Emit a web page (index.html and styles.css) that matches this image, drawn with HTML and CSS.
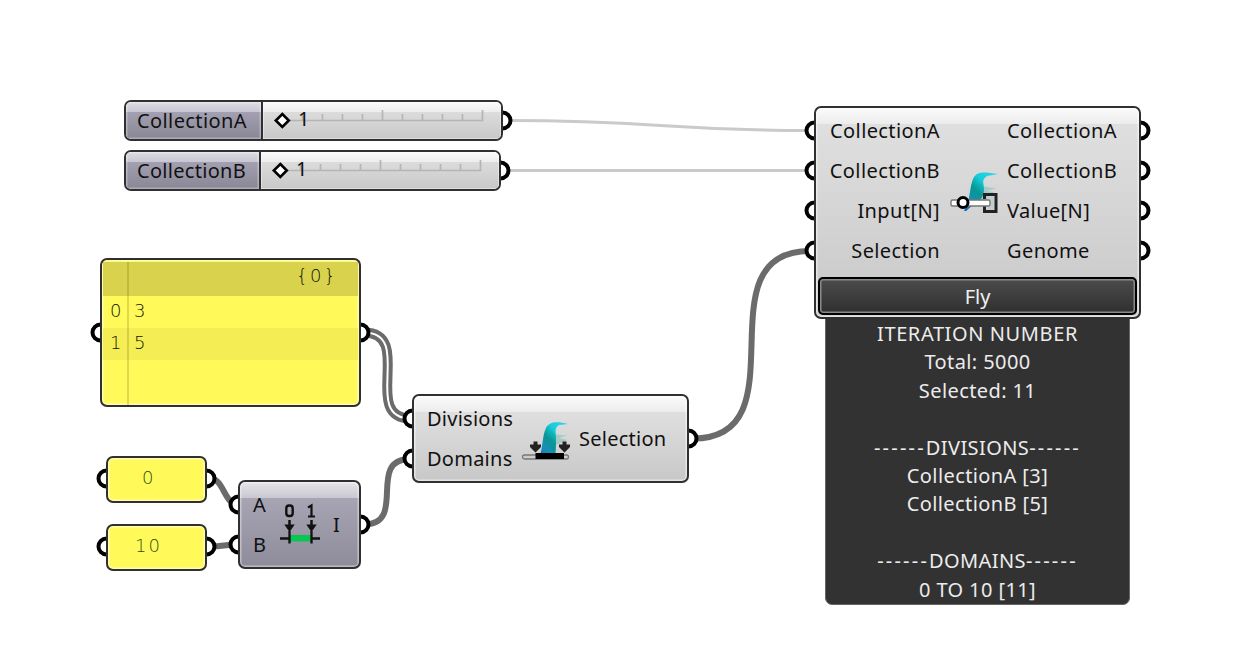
FILE: index.html
```html
<!DOCTYPE html>
<html lang="en">
<head>
<meta charset="utf-8">
<title>Definition canvas</title>
<link rel="stylesheet" href="styles.css">
</head>
<body>
<main class="canvas">
  <svg class="wires" width="1240" height="670" viewBox="0 0 1240 670" fill="none">
    <g stroke="#cacaca" stroke-width="3">
      <path d="M508 120.5C660 120.5 660 130.500 810 130.500"/>
      <path d="M508 170.500H810"/>
    </g>
    <g stroke="#6b6b6b" stroke-width="6">
      <path d="M693 438.500C805 438.500 698 251 810 251"/>
      <path d="M364 524.500C408 524.500 366 459 410 459"/>
      <path d="M210 478.500C224 478.500 224 504.500 238 504.500"/>
      <path d="M210 546.500C224 546.500 224 544.500 238 544.500"/>
    </g>
    <path d="M364 332.500C415 332.500 360 418.500 411 418.500" stroke="#6b6b6b" stroke-width="10"/>
    <path d="M364 332.500C415 332.500 360 418.500 411 418.500" stroke="#fff" stroke-width="2"/>
    <g class="ports" fill="#fff" stroke="#000" stroke-width="4">
      <circle cx="502.500" cy="120.500" r="8"/><circle cx="500.500" cy="170.500" r="8"/>
      <circle cx="100.500" cy="332.500" r="8"/><circle cx="360.500" cy="332.500" r="8"/>
      <circle cx="106.500" cy="478.500" r="8"/><circle cx="206.500" cy="478.500" r="8"/>
      <circle cx="106.500" cy="546.500" r="8"/><circle cx="206.500" cy="546.500" r="8"/>
      <circle cx="238.500" cy="504.500" r="8"/><circle cx="238.500" cy="544.500" r="8"/>
      <circle cx="360.500" cy="524.500" r="8"/>
      <circle cx="412.500" cy="418.500" r="8"/><circle cx="412.500" cy="458.500" r="8"/>
      <circle cx="688.500" cy="438.500" r="8"/>
      <circle cx="814.500" cy="130.500" r="8"/><circle cx="814.500" cy="170.500" r="8"/>
      <circle cx="814.500" cy="210.500" r="8"/><circle cx="814.500" cy="250.500" r="8"/>
      <circle cx="1140.500" cy="130.500" r="8"/><circle cx="1140.500" cy="170.500" r="8"/>
      <circle cx="1140.500" cy="210.500" r="8"/><circle cx="1140.500" cy="250.500" r="8"/>
    </g>
  </svg>

  <section class="node slider slider-a">
    <div class="slider-name">CollectionA</div>
    <div class="slider-track">
      <svg width="238" height="37" viewBox="0 0 238 37">
        <path d="M18 18.500H220.500M39.500 18.500V12M59.500 18.500V12M79.500 18.500V12M99.500 18.500V12M119.500 18.500V8M139.500 18.500V12M159.500 18.500V12M179.500 18.500V12M199.500 18.500V12M219.500 18.500V8" stroke="#b5b5b5" stroke-width="1.700" fill="none"/>
        <path d="M19.300 12L25.800 18.500L19.300 25L12.800 18.500Z" fill="#fff" stroke="#000" stroke-width="2.600"/>
      </svg>
      <span class="slider-value">1</span>
    </div>
  </section>
  <section class="node slider slider-b">
    <div class="slider-name">CollectionB</div>
    <div class="slider-track">
      <svg width="238" height="37" viewBox="0 0 238 37">
        <path d="M18 18.500H220.500M39.500 18.500V12M59.500 18.500V12M79.500 18.500V12M99.500 18.500V12M119.500 18.500V8M139.500 18.500V12M159.500 18.500V12M179.500 18.500V12M199.500 18.500V12M219.500 18.500V8" stroke="#b5b5b5" stroke-width="1.700" fill="none"/>
        <path d="M19.300 12L25.800 18.500L19.300 25L12.800 18.500Z" fill="#fff" stroke="#000" stroke-width="2.600"/>
      </svg>
      <span class="slider-value">1</span>
    </div>
  </section>

  <section class="node panel panel-list">
    <div class="panel-head"><span>{0}</span></div>
    <div class="panel-row"><span>0</span><span>3</span></div>
    <div class="panel-row alt"><span>1</span><span>5</span></div>
  </section>
  <section class="node panel panel-min"><span>0</span></section>
  <section class="node panel panel-max"><span>10</span></section>

  <section class="node domain">
    <div class="column"><span>A</span><span>B</span></div>
    <svg class="domain-icon" width="42" height="46" viewBox="0 0 42 46">
      <g fill="none" stroke="#111">
        <rect x="6.300" y="3.500" width="6.400" height="10.500" rx="2.800" stroke-width="2.400"/>
        <path d="M28 5.500L31.500 3.500V14.500M28 14.500H35" stroke-width="2.200"/>
        <path d="M9.500 18V23M31.500 18V23" stroke-width="2.500"/>
        <path d="M0 36.500H40" stroke-width="2.300"/>
      </g>
      <path d="M4.300 22.500H14.700L9.500 30ZM26.300 22.500H36.700L31.500 30Z" fill="#111"/>
      <path d="M10 33H31V39.500H10Z" fill="#08c653"/>
      <path d="M9.500 29V41.500M31.500 29V41.500" stroke="#111" stroke-width="2.300"/>
    </svg>
    <div class="output">I</div>
  </section>

  <section class="node component selection">
    <div class="column"><span>Divisions</span><span>Domains</span></div>
    <svg class="selection-icon" width="50" height="44" viewBox="0 0 50 44">
      <defs>
        <linearGradient id="bird" x1="0" y1="1" x2=".8" y2="0">
          <stop offset="0" stop-color="#125eb0"/><stop offset=".25" stop-color="#168fba"/><stop offset=".5" stop-color="#079594"/><stop offset=".75" stop-color="#16cddb"/><stop offset="1" stop-color="#27d5e5"/>
        </linearGradient>
        <filter id="soft"><feGaussianBlur stdDeviation=".65"/></filter>
      </defs>
      <g filter="url(#soft)">
        <path d="M26 13C35 14 40 16 47 15L38 18L46 20L35 25L25 27Z" fill="#8ec6bf" opacity=".7"/>
        <path d="M18 38C22 29 21 16 25 8C28 2 35 1 47 4L38 5C33 8 35 12 35 18C35 27 35 31 34 37Z" fill="url(#bird)"/>
      </g>
      <rect x="1.500" y="35" width="46" height="4" rx="2" fill="#ccc" stroke="#777" stroke-width="1.300"/>
      <path d="M14.500 33H43V39H14.500Z" fill="#000"/>
      <path d="M14.500 21.500V28M43.500 21.500V28" stroke="#222" stroke-width="4"/>
      <path d="M9 24.500H20V27L14.500 32.500L9 27ZM38 24.500H49V27L43.500 32.500L38 27Z" fill="#222"/>
    </svg>
    <div class="output">Selection</div>
  </section>

  <aside class="report">
    <p class="caps">ITERATION NUMBER</p>
    <p>Total: 5000</p>
    <p>Selected: 11</p>
    <p>&nbsp;</p>
    <p><span class="rule">------</span>DIVISIONS<span class="rule">------</span></p>
    <p>CollectionA [3]</p>
    <p>CollectionB [5]</p>
    <p>&nbsp;</p>
    <p><span class="rule">------</span>DOMAINS<span class="rule">------</span></p>
    <p>0 TO 10 [11]</p>
  </aside>
  <section class="node component fly">
    <div class="fly-body">
      <div class="column inputs"><span>CollectionA</span><span>CollectionB</span><span>Input[N]</span><span>Selection</span></div>
      <svg class="fly-icon" width="50" height="46" viewBox="0 0 50 46">
        <g filter="url(#soft)">
          <path d="M28 12C34 15 39 17 48 17L38 20L45 21L37 29L28 29Z" fill="#8ec6bf" opacity=".7"/>
          <path d="M15 40C22 29 20 15 25 6C29 0 36 1 49 3L38 5C32 9 35 12 35 18C35 25 32 29 29 30L17 40Z" fill="url(#bird)"/>
        </g>
        <path d="M35.500 28V23.500H47V40.500H35.500V35" fill="none" stroke="#222" stroke-width="3"/>
        <path d="M38 25.500H45V38.500H38Z" fill="#c4cfcd"/>
        <rect x="2" y="29" width="39" height="6" rx="1.500" fill="#fff" stroke="#777" stroke-width="1.400"/>
        <circle cx="14" cy="31.500" r="5" fill="#fff" stroke="#000" stroke-width="3"/>
      </svg>
      <div class="column outputs"><span>CollectionA</span><span>CollectionB</span><span>Value[N]</span><span>Genome</span></div>
    </div>
    <div class="fly-button">Fly</div>
  </section>
</main>
</body>
</html>
```
FILE: styles.css
```css
* { box-sizing: border-box; }
body { margin: 0; background: #fff; }
p { margin: 0; }
.canvas {
  position: relative;
  width: 1240px;
  height: 670px;
  overflow: hidden;
  background: #fff;
  color: #111;
  font: 20px/40px "Noto Sans", "Open Sans", sans-serif;
  white-space: nowrap;
}
.wires { position: absolute; left: 0; top: 0; }
.node {
  position: absolute;
  display: flex;
  border: 2px solid #303030;
  border-radius: 7px;
  overflow: hidden;
}
.column { display: flex; flex-direction: column; }

.slider { left: 124px; height: 41px; }
.slider-a { top: 100px; width: 379px; }
.slider-b { top: 150px; width: 377px; }
.slider-name {
  width: 137px;
  padding-left: 11px;
  border-right: 2px solid #303030;
  line-height: 38px;
  letter-spacing: .4px;
  background: linear-gradient(#dddce3 0, #c8c6d2 10px, #a3a1b1 10px, #898796 100%);
  box-shadow: inset 0 0 0 1.5px rgba(255, 255, 255, .3);
}
.slider-b .slider-name { width: 135px; letter-spacing: .3px; }
.slider-track {
  position: relative;
  flex: 1;
  background: linear-gradient(#fbfbfb 0, #ededed 10px, #dcdcdc 10px, #c8c8c8 100%);
  box-shadow: inset 0 0 0 1px rgba(255, 255, 255, .4);
}
.slider-track svg { display: block; }
.slider-value { position: absolute; left: 35px; top: -2px; line-height: 38px; }

.panel {
  background: #fff95a;
  box-shadow: inset 0 0 0 1.5px #fffcae;
  color: #111505;
  font-family: "DejaVu Sans Light", "DejaVu Sans", "Open Sans", sans-serif;
  font-weight: 200;
  font-size: 18px;
}
.panel-list { left: 100px; top: 258px; width: 261px; height: 149px; flex-direction: column; padding: 2px 1px 0; }
.panel-list::after {
  content: "";
  position: absolute;
  left: 25px;
  top: 2px;
  bottom: 0;
  width: 2px;
  background: rgba(90, 90, 0, .2);
}
.panel-head { height: 34px; padding-right: 20px; background: #d8d24d; text-align: right; line-height: 28px; letter-spacing: 2.5px; }
.panel-row { display: flex; height: 32px; line-height: 29px; }
.panel-row span { width: 24px; padding-left: 7px; }
.panel-row.alt { background: #f4ee54; }
.panel-min, .panel-max { left: 106px; width: 101px; height: 47px; line-height: 40px; letter-spacing: 2px; color: #2c5210; }
.panel-min { top: 456px; padding-left: 34px; }
.panel-max { top: 524px; padding-left: 27px; }

.domain {
  left: 238px;
  top: 480px;
  width: 123px;
  height: 89px;
  padding: 3px 0 0 13px;
  background: linear-gradient(#e6e5eb 0, #c9c8d1 16px, #a7a5b3 16px, #8e8c9a 100%);
  box-shadow: inset 0 0 0 1.5px rgba(255, 255, 255, .4);
}
.domain .column { width: 27px; }
.domain-icon { margin-top: 17px; }
.domain .output { margin: 20px 0 0 11px; }

.component {
  background: linear-gradient(#fbfbfb 0, #ececec 16px, #dfdfdf 16px, #c8c8c8 100%);
  box-shadow: inset 0 0 0 1.5px rgba(255, 255, 255, .5);
}
.selection { left: 412px; top: 394px; width: 277px; height: 89px; padding: 3px 0 0 13px; letter-spacing: .25px; }
.selection .column { width: 94px; }
.selection-icon { margin-top: 21px; }
.selection .output { margin: 20px 0 0 8px; }

.fly { left: 814px; top: 106px; width: 327px; height: 213px; flex-direction: column; padding: 3px 2px 2px; }
.fly-body { display: flex; height: 167px; letter-spacing: .4px; }
.inputs { width: 122px; text-align: right; }
.fly-icon { margin: 60px 0 0 9px; }
.outputs { margin-left: 8px; }
.fly-button {
  height: 38px;
  border: 2px solid #000;
  border-radius: 5px;
  box-shadow: inset 0 0 0 1.5px #8a8a8a;
  background: linear-gradient(#4c4c4c, #2f2f2f);
  color: #f0f0f0;
  line-height: 35px;
  text-align: center;
}

.report {
  position: absolute;
  left: 825px;
  top: 312px;
  width: 305px;
  height: 293px;
  padding-top: 7px;
  border: 1px solid #666;
  border-radius: 7px;
  background: #323232;
  color: #ececec;
  line-height: 28.4px;
  letter-spacing: .4px;
  text-align: center;
}
.caps { letter-spacing: .6px; }
.rule { letter-spacing: 2.2px; }
```
